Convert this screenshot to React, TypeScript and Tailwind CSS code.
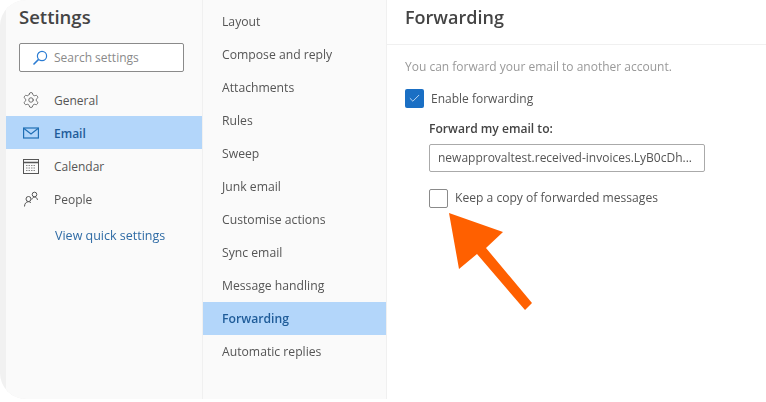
import React from "react";
import { Settings, Check } from "lucide-react";

const font = "font-['Open_Sans',sans-serif]";

const SearchIcon = () => (
  <svg width="16" height="16" viewBox="0 0 16 16" fill="none" stroke="#2b7cd3" strokeWidth="1.2">
    <circle cx="10" cy="6" r="4.600" />
    <path d="M6.600 9.400L1.500 14.500" strokeWidth="1.500" />
  </svg>
);

const MailIcon = () => (
  <svg width="16" height="12" viewBox="0 0 16 12" fill="none" stroke="#1f6fb5" strokeWidth="1.200">
    <rect x="0.600" y="1" width="14.800" height="10" />
    <path d="M1 1.500L8 7L15 1.500" />
  </svg>
);

const CalendarIcon = () => (
  <svg width="16" height="16" viewBox="0 0 16 16" fill="none" stroke="#555" strokeWidth="1">
    <rect x="0.500" y="1.500" width="15" height="14" />
    <path d="M0.500 4.500H15.500" strokeWidth="1.500" />
    <path d="M3 7.500h10M3 10h10M3 12.500h10" strokeWidth="1.200" strokeDasharray="1.500 1" stroke="#888" />
  </svg>
);

const PeopleIcon = () => (
  <svg width="16" height="16" viewBox="0 0 16 16" fill="none" stroke="#555" strokeWidth="1">
    <circle cx="5.500" cy="8" r="2.500" />
    <path d="M1.500 15.500c0-2.800 1.600-4.800 4-4.800 1 0 1.800.3 2.400 1" />
    <circle cx="11.500" cy="3.500" r="2.300" />
    <path d="M8.800 8.500c.6-1.800 1.600-2.400 2.800-2.400 1.500 0 2.500 1 2.900 2.800" />
  </svg>
);

const mainItems = [
  { label: "General", icon: <Settings size={18} strokeWidth={1.1} color="#555" /> },
  { label: "Email", icon: <MailIcon />, active: true },
  { label: "Calendar", icon: <CalendarIcon /> },
  { label: "People", icon: <PeopleIcon /> },
];

const subItems = [
  "Layout",
  "Compose and reply",
  "Attachments",
  "Rules",
  "Sweep",
  "Junk email",
  "Customise actions",
  "Sync email",
  "Message handling",
  "Forwarding",
  "Automatic replies",
];

export default function App() {
  return (
    <div className={`relative w-[766px] h-[402px] overflow-hidden bg-white ${font}`}>
      <div className="flex h-[399px] overflow-hidden rounded-l-[26px] bg-[#f1f1f1] blur-[0.6px]">
        {/* settings nav */}
        <div className="ml-[6px] w-[197px] shrink-0 bg-[#fafafa] border-r border-[#f0f0f0]">
          <h1 className="pl-[13px] pt-[3px] h-[43px] text-[18.5px] leading-[28px] font-semibold text-[#444]">Settings</h1>
          <div className="ml-[13px] flex h-[29px] w-[165px] items-center gap-[6px] border border-[#8a8a8a] bg-white pl-[12px] rounded-[2px]">
            <SearchIcon />
            <span className="text-[12px] text-[#8a8a8a]">Search settings</span>
          </div>
          <div className="mt-[11px]">
            {mainItems.map((item) => (
              <div
                key={item.label}
                className={`flex h-[33px] items-center pl-[16px] gap-[14px] ${item.active ? "bg-[#b3d6fa]" : ""}`}
              >
                <span className="flex w-[18px] justify-center">{item.icon}</span>
                <span className={`pt-[3px] text-[12px] ${item.active ? "font-semibold text-[#1f5c99]" : "text-[#555]"}`}>
                  {item.label}
                </span>
              </div>
            ))}
          </div>
          <div className="pl-[49px] pt-[12px] text-[12.5px] text-[#2f6ba5]">View quick settings</div>
        </div>

        {/* sub nav */}
        <div className="w-[184px] shrink-0 bg-[#fafafa] border-r border-[#f0f0f0] pt-[5px]">
          {subItems.map((label) => (
            <div
              key={label}
              className={`flex h-[33px] items-center pl-[19px] pt-[2px] text-[12.2px] ${
                label === "Forwarding" ? "bg-[#b3d6fa] font-semibold text-[#1f5c99]" : "text-[#555]"
              }`}
            >
              {label}
            </div>
          ))}
        </div>

        {/* content */}
        <div className="flex-1 bg-white">
          <div className="h-[45px] border-b border-[#f0f0f0] pl-[18px] pt-[3px] text-[18px] leading-[28px] font-semibold text-[#444]">
            Forwarding
          </div>
          <div className="pl-[18px] pt-[13px]">
            <p className="text-[12px] leading-[18px] text-[#999]">You can forward your email to another account.</p>
            <div className="mt-[12px] flex items-center gap-[7px]">
              <span className="flex h-[19px] w-[19px] items-center justify-center rounded-[2px] bg-[#1a6fc4]">
                <Check size={13} strokeWidth={1.6} color="#cfe4fa" />
              </span>
              <span className="pt-[2px] text-[12px] text-[#555]">Enable forwarding</span>
            </div>
            <div className="pl-[24px]">
              <div className="mt-[12px] text-[12.1px] leading-[18px] font-semibold text-[#444]">Forward my email to:</div>
              <div className="mt-[6px] flex h-[28px] w-[276px] items-center rounded-[2px] border border-[#aaa] pl-[8px] text-[12px] text-[#555] whitespace-nowrap overflow-hidden">
                newapprovaltest.received-invoices.LyB0cDh...
              </div>
              <div className="mt-[17px] flex items-center gap-[7px]">
                <span className="h-[19px] w-[19px] rounded-[2px] border border-[#8a8a8a] bg-white" />
                <span className="-mt-[1px] text-[12.1px] text-[#555]">Keep a copy of forwarded messages</span>
              </div>
            </div>
          </div>
        </div>
      </div>

      {/* annotation arrow */}
      <svg className="absolute inset-0" width="766" height="402" viewBox="0 0 766 402">
        <path d="M449 213L503 232L486 248L532 303L525 310L477 254L459 269Z" fill="#ff6000" />
      </svg>
    </div>
  );
}
